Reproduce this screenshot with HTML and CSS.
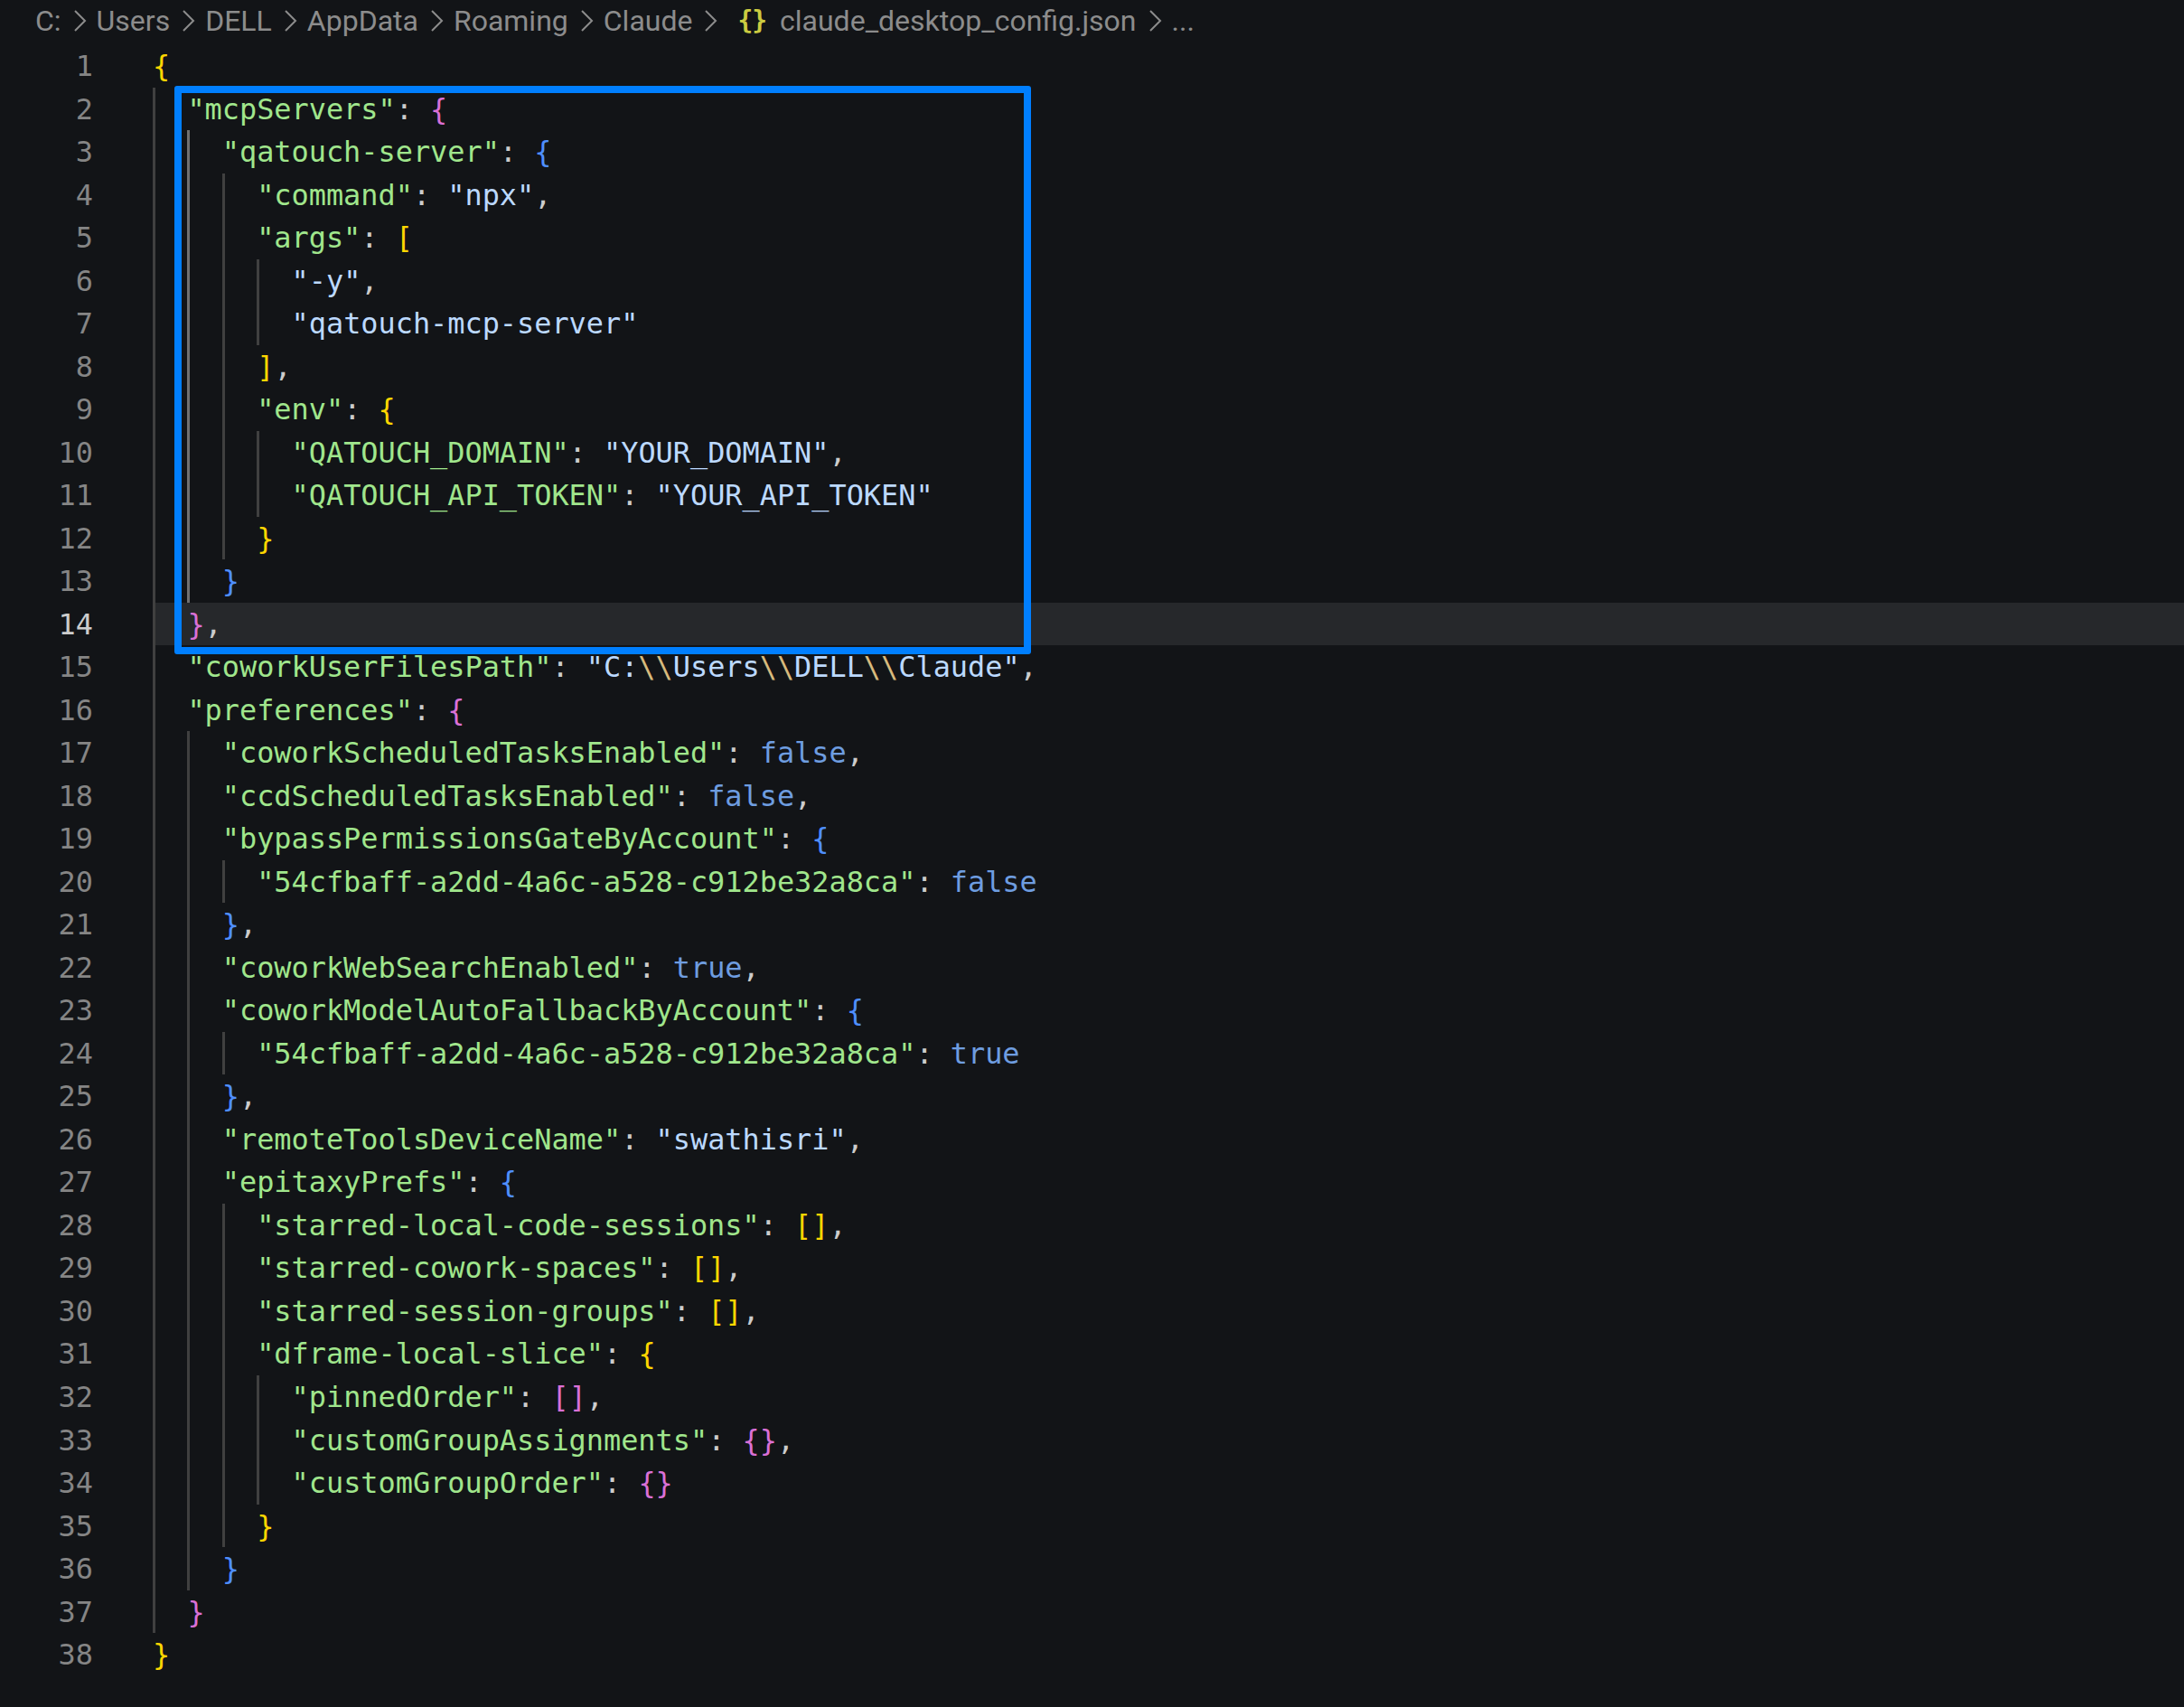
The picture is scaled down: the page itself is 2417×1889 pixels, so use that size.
FILE: index.html
```html
<!DOCTYPE html>
<html lang="en">
<head>
  <meta charset="UTF-8" />
  <title>claude_desktop_config.json</title>
  <link rel="stylesheet" href="styles.css">
</head>
<body>

  <nav class="crumbs">
    <span>C:</span>
    <svg class="chev" viewBox="0 0 15 24"><path d="M2 1l11 11L2 23" /></svg>
    <span>Users</span>
    <svg class="chev" viewBox="0 0 15 24"><path d="M2 1l11 11L2 23" /></svg>
    <span>DELL</span>
    <svg class="chev" viewBox="0 0 15 24"><path d="M2 1l11 11L2 23" /></svg>
    <span>AppData</span>
    <svg class="chev" viewBox="0 0 15 24"><path d="M2 1l11 11L2 23" /></svg>
    <span>Roaming</span>
    <svg class="chev" viewBox="0 0 15 24"><path d="M2 1l11 11L2 23" /></svg>
    <span>Claude</span>
    <svg class="chev" viewBox="0 0 15 24"><path d="M2 1l11 11L2 23" /></svg>
    <span class="file-icon">{ }</span>
    <span>claude_desktop_config.json</span>
    <svg class="chev" viewBox="0 0 15 24"><path d="M2 1l11 11L2 23" /></svg>
    <span>...</span>
  </nav>

  <main class="editor">
    <div class="highlight-box"></div>

    <div class="line"><span class="num">1</span><code class="code"><b class="y">{</b></code></div>
    <div class="line"><span class="num">2</span><code class="code"><i></i><span class="k">"mcpServers"</span><span class="p">: </span><b class="m">{</b></code></div>
    <div class="line"><span class="num">3</span><code class="code"><i></i><i class="on"></i><span class="k">"qatouch-server"</span><span class="p">: </span><b class="u">{</b></code></div>
    <div class="line"><span class="num">4</span><code class="code"><i></i><i class="on"></i><i></i><span class="k">"command"</span><span class="p">: </span><span class="s">"npx"</span><span class="p">,</span></code></div>
    <div class="line"><span class="num">5</span><code class="code"><i></i><i class="on"></i><i></i><span class="k">"args"</span><span class="p">: </span><b class="y">[</b></code></div>
    <div class="line"><span class="num">6</span><code class="code"><i></i><i class="on"></i><i></i><i></i><span class="s">"-y"</span><span class="p">,</span></code></div>
    <div class="line"><span class="num">7</span><code class="code"><i></i><i class="on"></i><i></i><i></i><span class="s">"qatouch-mcp-server"</span></code></div>
    <div class="line"><span class="num">8</span><code class="code"><i></i><i class="on"></i><i></i><b class="y">]</b><span class="p">,</span></code></div>
    <div class="line"><span class="num">9</span><code class="code"><i></i><i class="on"></i><i></i><span class="k">"env"</span><span class="p">: </span><b class="y">{</b></code></div>
    <div class="line"><span class="num">10</span><code class="code"><i></i><i class="on"></i><i></i><i></i><span class="k">"QATOUCH_DOMAIN"</span><span class="p">: </span><span class="s">"YOUR_DOMAIN"</span><span class="p">,</span></code></div>
    <div class="line"><span class="num">11</span><code class="code"><i></i><i class="on"></i><i></i><i></i><span class="k">"QATOUCH_API_TOKEN"</span><span class="p">: </span><span class="s">"YOUR_API_TOKEN"</span></code></div>
    <div class="line"><span class="num">12</span><code class="code"><i></i><i class="on"></i><i></i><b class="y">}</b></code></div>
    <div class="line"><span class="num">13</span><code class="code"><i></i><i class="on"></i><b class="u">}</b></code></div>
    <div class="line current"><span class="num">14</span><code class="code"><i></i><b class="m">}</b><span class="p">,</span></code></div>
    <div class="line"><span class="num">15</span><code class="code"><i></i><span class="k">"coworkUserFilesPath"</span><span class="p">: </span><span class="s">"C:<em>\\</em>Users<em>\\</em>DELL<em>\\</em>Claude"</span><span class="p">,</span></code></div>
    <div class="line"><span class="num">16</span><code class="code"><i></i><span class="k">"preferences"</span><span class="p">: </span><b class="m">{</b></code></div>
    <div class="line"><span class="num">17</span><code class="code"><i></i><i></i><span class="k">"coworkScheduledTasksEnabled"</span><span class="p">: </span><span class="c">false</span><span class="p">,</span></code></div>
    <div class="line"><span class="num">18</span><code class="code"><i></i><i></i><span class="k">"ccdScheduledTasksEnabled"</span><span class="p">: </span><span class="c">false</span><span class="p">,</span></code></div>
    <div class="line"><span class="num">19</span><code class="code"><i></i><i></i><span class="k">"bypassPermissionsGateByAccount"</span><span class="p">: </span><b class="u">{</b></code></div>
    <div class="line"><span class="num">20</span><code class="code"><i></i><i></i><i></i><span class="k">"54cfbaff-a2dd-4a6c-a528-c912be32a8ca"</span><span class="p">: </span><span class="c">false</span></code></div>
    <div class="line"><span class="num">21</span><code class="code"><i></i><i></i><b class="u">}</b><span class="p">,</span></code></div>
    <div class="line"><span class="num">22</span><code class="code"><i></i><i></i><span class="k">"coworkWebSearchEnabled"</span><span class="p">: </span><span class="c">true</span><span class="p">,</span></code></div>
    <div class="line"><span class="num">23</span><code class="code"><i></i><i></i><span class="k">"coworkModelAutoFallbackByAccount"</span><span class="p">: </span><b class="u">{</b></code></div>
    <div class="line"><span class="num">24</span><code class="code"><i></i><i></i><i></i><span class="k">"54cfbaff-a2dd-4a6c-a528-c912be32a8ca"</span><span class="p">: </span><span class="c">true</span></code></div>
    <div class="line"><span class="num">25</span><code class="code"><i></i><i></i><b class="u">}</b><span class="p">,</span></code></div>
    <div class="line"><span class="num">26</span><code class="code"><i></i><i></i><span class="k">"remoteToolsDeviceName"</span><span class="p">: </span><span class="s">"swathisri"</span><span class="p">,</span></code></div>
    <div class="line"><span class="num">27</span><code class="code"><i></i><i></i><span class="k">"epitaxyPrefs"</span><span class="p">: </span><b class="u">{</b></code></div>
    <div class="line"><span class="num">28</span><code class="code"><i></i><i></i><i></i><span class="k">"starred-local-code-sessions"</span><span class="p">: </span><b class="y">[]</b><span class="p">,</span></code></div>
    <div class="line"><span class="num">29</span><code class="code"><i></i><i></i><i></i><span class="k">"starred-cowork-spaces"</span><span class="p">: </span><b class="y">[]</b><span class="p">,</span></code></div>
    <div class="line"><span class="num">30</span><code class="code"><i></i><i></i><i></i><span class="k">"starred-session-groups"</span><span class="p">: </span><b class="y">[]</b><span class="p">,</span></code></div>
    <div class="line"><span class="num">31</span><code class="code"><i></i><i></i><i></i><span class="k">"dframe-local-slice"</span><span class="p">: </span><b class="y">{</b></code></div>
    <div class="line"><span class="num">32</span><code class="code"><i></i><i></i><i></i><i></i><span class="k">"pinnedOrder"</span><span class="p">: </span><b class="m">[]</b><span class="p">,</span></code></div>
    <div class="line"><span class="num">33</span><code class="code"><i></i><i></i><i></i><i></i><span class="k">"customGroupAssignments"</span><span class="p">: </span><b class="m">{}</b><span class="p">,</span></code></div>
    <div class="line"><span class="num">34</span><code class="code"><i></i><i></i><i></i><i></i><span class="k">"customGroupOrder"</span><span class="p">: </span><b class="m">{}</b></code></div>
    <div class="line"><span class="num">35</span><code class="code"><i></i><i></i><i></i><b class="y">}</b></code></div>
    <div class="line"><span class="num">36</span><code class="code"><i></i><i></i><b class="u">}</b></code></div>
    <div class="line"><span class="num">37</span><code class="code"><i></i><b class="m">}</b></code></div>
    <div class="line"><span class="num">38</span><code class="code"><b class="y">}</b></code></div>
  </main>

</body>
</html>
```

FILE: styles.css
```css
body {
  margin: 0;
  min-height: 1889px;
  background: #121417;
  overflow: hidden;
}

/* breadcrumb bar */
.crumbs {
  height: 49px;
  padding-left: 39px;
  display: flex;
  align-items: flex-start;
  gap: 11px;
  font-family: "Roboto", sans-serif;
  font-size: 32px;
  line-height: 46px;
  color: #8c8c8c;
}
.chev {
  width: 15px;
  height: 24px;
  margin: 11px 0 0 2px;
  fill: none;
  stroke: #8c8c8c;
  stroke-width: 2;
}
.file-icon {
  color: #cbcb41;
  font-family: "DejaVu Sans Mono", monospace;
  font-size: 28px;
  font-weight: bold;
  letter-spacing: -9px;
  margin-left: 11px;
  margin-right: 12px;
}

/* code */
.editor {
  position: relative;
  font-family: "DejaVu Sans Mono", monospace;
  font-size: 31.88px;
}
.line {
  display: flex;
  height: 47.53px;
  line-height: 49px;
}
.num {
  width: 103px;
  flex: none;
  text-align: right;
  color: #858585;
  margin-right: 66px;
}
.code {
  flex: 1;
  display: flex;
  font-family: inherit;
  font-size: inherit;
  white-space: pre;
  color: #cccccc;
}
.code i {
  width: 38.4px;
  flex: none;
  box-sizing: border-box;
  border-left: 3px solid #404040;
}
.code i.on {
  border-left-color: #707070;
}
.code b {
  font-weight: normal;
}
.code em {
  font-style: normal;
  color: #d7ba7d;
}
.current .num {
  color: #cccccc;
}
.current .code {
  background: #26282b;
}

.k { color: #a0e68c; }
.s { color: #bcd9ff; }
.c { color: #6e9de0; }
.p { color: #cccccc; }
.y { color: #ffd700; }
.m { color: #da70d6; }
.u { color: #4f8fff; }

/* blue annotation drawn over the code */
.highlight-box {
  position: absolute;
  left: 193px;
  top: 46px;
  width: 948px;
  height: 629px;
  box-sizing: border-box;
  border: 8px solid #007fff;
  border-radius: 3px;
}
```
